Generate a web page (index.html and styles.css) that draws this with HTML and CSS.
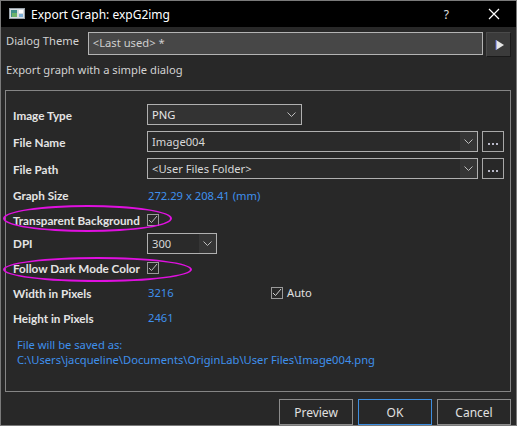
FILE: index.html
```html
<!DOCTYPE html>
<html>
<head>
<meta charset="utf-8">
<link rel="stylesheet" href="styles.css">
</head>
<body>
<div class="window">
  <div class="titlebar">
    <svg class="appicon" width="16" height="11" viewBox="0 0 16 11">
      <rect x="0.5" y="0.5" width="15" height="10" fill="#d8dde2" stroke="#9aa3ab"/>
      <rect x="2" y="2" width="6" height="7" fill="#3f8f8a"/>
      <rect x="3" y="5" width="5" height="4" fill="#6db36a"/>
      <rect x="10" y="2" width="4" height="3" fill="#ffffff"/>
      <rect x="10" y="6" width="4" height="3" fill="#7fb0d8"/>
    </svg>
    <span class="title">Export Graph: expG2img</span>
    <span class="help">?</span>
    <svg class="close" width="12" height="12" viewBox="0 0 12 12"><path d="M1 1L11 11M11 1L1 11" stroke="#ffffff" stroke-width="1.2"/></svg>
  </div>
  <div class="body">
    <div class="theme-row">
      <span class="theme-label">Dialog Theme</span>
      <div class="theme-input">&lt;Last used&gt; *</div>
      <div class="theme-btn"><svg width="10" height="12" viewBox="0 0 10 12"><path d="M1 1L9 6L1 11Z" fill="#e6e6e6"/><path d="M1 1V11" stroke="#5a6ad8" stroke-width="1"/></svg></div>
    </div>
    <div class="desc">Export graph with a simple dialog</div>
    <div class="group">
      <div class="row r1">
        <span class="label">Image Type</span>
        <div class="combo list w-type"><span class="ctext">PNG</span><span class="chev"><svg width="9" height="5" viewBox="0 0 9 5"><path d="M0.5 0.5L4.5 4.5L8.5 0.5" fill="none" stroke="#bdbdbd"/></svg></span></div>
      </div>
      <div class="row r2">
        <span class="label">File Name</span>
        <div class="combo edit w-long"><span class="ctext">Image004</span><span class="dropbtn"><svg width="9" height="5" viewBox="0 0 9 5"><path d="M0.5 0.5L4.5 4.5L8.5 0.5" fill="none" stroke="#bdbdbd"/></svg></span></div>
        <div class="dots"><span></span><span></span><span></span></div>
      </div>
      <div class="row r3">
        <span class="label">File Path</span>
        <div class="combo edit w-long"><span class="ctext">&lt;User Files Folder&gt;</span><span class="dropbtn"><svg width="9" height="5" viewBox="0 0 9 5"><path d="M0.5 0.5L4.5 4.5L8.5 0.5" fill="none" stroke="#bdbdbd"/></svg></span></div>
        <div class="dots"><span></span><span></span><span></span></div>
      </div>
      <div class="row r4">
        <span class="label">Graph Size</span>
        <span class="value">272.29 x 208.41 (mm)</span>
      </div>
      <div class="row r5">
        <span class="label lbl-inline">Transparent Background</span>
        <span class="check"><svg width="10" height="9" viewBox="0 0 10 9"><path d="M1 5L3.5 7.5L9 1" fill="none" stroke="#bdbdbd"/></svg></span>
      </div>
      <div class="row r6">
        <span class="label">DPI</span>
        <div class="combo edit w-dpi"><span class="ctext">300</span><span class="dropbtn"><svg width="9" height="5" viewBox="0 0 9 5"><path d="M0.5 0.5L4.5 4.5L8.5 0.5" fill="none" stroke="#bdbdbd"/></svg></span></div>
      </div>
      <div class="row r7">
        <span class="label lbl-inline">Follow Dark Mode Color</span>
        <span class="check"><svg width="10" height="9" viewBox="0 0 10 9"><path d="M1 5L3.5 7.5L9 1" fill="none" stroke="#bdbdbd"/></svg></span>
      </div>
      <div class="row r8">
        <span class="label">Width in Pixels</span>
        <span class="value num">3216</span>
        <span class="check auto-check"><svg width="10" height="9" viewBox="0 0 10 9"><path d="M1 5L3.5 7.5L9 1" fill="none" stroke="#d0d0d0"/></svg></span>
        <span class="auto">Auto</span>
      </div>
      <div class="row r9">
        <span class="label">Height in Pixels</span>
        <span class="value num">2461</span>
      </div>
      <div class="saved">
        <div>File will be saved as:</div>
        <div>C:\Users\jacqueline\Documents\OriginLab\User Files\Image004.png</div>
      </div>
    </div>
    <div class="buttons">
      <div class="btn">Preview</div>
      <div class="btn ok">OK</div>
      <div class="btn">Cancel</div>
    </div>
  </div>
  <div class="mark m1"></div>
  <div class="mark m2"></div>
</div>
</body>
</html>
```

FILE: styles.css
```css
* { box-sizing: border-box; }
html, body { margin: 0; padding: 0; background: #282828; }
body { font-family: "Noto Sans", "Open Sans", sans-serif; font-size: 11.2px; color: #e6e6e6; }
.window {
  position: relative;
  width: 517px; height: 426px;
  border: 1px solid #7a7a7a;
  background: #282828;
  display: flex; flex-direction: column;
}
.titlebar {
  height: 29px; background: #000;
  display: flex; align-items: center;
  color: #fff; font-size: 12px;
}
.appicon { margin-left: 8px; margin-top: -1px; }
.title { margin-left: 6px; }
.help { margin-left: auto; font-size: 12px; color: #e0e0e0; margin-right: 39px; }
.close { margin-right: 16px; }
.body { flex: 1; display: flex; flex-direction: column; padding: 0 5px 0 4px; }
.theme-row { display: flex; align-items: flex-start; margin-top: 5px; height: 25px; }
.theme-label { color: #d2d2d2; margin-left: 1px; width: 82px; line-height: 14px; margin-top: 2px; }
.theme-input {
  width: 396px; height: 23px;
  background: #474747; border: 1px solid #b4b4b4;
  color: #cfcfcf; padding-left: 4px; line-height: 20px;
}
.theme-btn {
  width: 25px; height: 25px; margin-left: 3px;
  background: #3b3b3b; border: 1px solid #1a1a1a;
  border-top-color: #4a4a4a; border-left-color: #4a4a4a;
  display: flex; align-items: center; justify-content: center; padding-left: 2px;
}
.desc { color: #d2d2d2; margin-left: 1px; margin-top: 6px; line-height: 14px; }
.group {
  margin-top: 13px;
  height: 302px;
  border: 1px solid #858585;
  padding: 10px 0 0 7px;
  display: flex; flex-direction: column;
}
.row { display: flex; align-items: center; }
.r1 { height: 27px; }
.r2 { height: 27px; }
.r3 { height: 27px; }
.r4 { height: 26px; }
.r5 { height: 23px; }
.r6 { height: 24px; }
.r7 { height: 25px; }
.r8 { height: 25px; }
.r9 { height: 25px; }
.label { font-family: "Lato", "Noto Sans", sans-serif; font-size: 11.7px; font-weight: bold; color: #e4e4e4; width: 134px; flex: none; }
.lbl-inline { width: auto; margin-right: 7px; }
.value { color: #3f90ec; margin-left: 1px; }
.combo {
  height: 21px; border: 1px solid #b0b0b0;
  display: flex; align-items: center;
}
.combo.list { background: #333; }
.combo.edit { background: #2a2a2a; }
.ctext { padding-left: 4px; flex: 1; color: #e6e6e6; }
.edit .ctext { color: #d8d8d8; }
.w-type { width: 155px; }
.w-type .chev { width: 18px; display: flex; justify-content: center; margin-right: 1px; }
.w-long { width: 331px; }
.w-dpi { width: 70px; }
.dropbtn { width: 17px; height: 19px; background: #353535; display: flex; align-items: center; justify-content: center; }
.dots {
  width: 22px; height: 21px; margin-left: 4px;
  border: 1px solid #a8a8a8;
  display: flex; justify-content: center; align-items: flex-end; gap: 2px; padding-bottom: 6px;
}
.dots span { width: 2px; height: 2px; background: #b8b8c8; }
.check {
  width: 12px; height: 12px; border: 1px solid #9a9a9a;
  display: flex; align-items: center; justify-content: center; flex: none;
}
.num { width: 123px; }
.auto-check { margin-left: 0; }
.auto { margin-left: 4px; color: #e0e0e0; }
.saved { color: #3f90ec; margin-left: 4px; margin-top: 7px; line-height: 15px; }
.buttons { display: flex; justify-content: flex-end; gap: 5px; margin-top: 7px; }
.btn {
  width: 74px; height: 26px;
  border: 1px solid #8c8c8c;
  display: flex; align-items: center; justify-content: center;
  color: #e0e0e0; font-size: 12px;
}
.btn.ok { border-color: #3d8ee0; }
.mark { position: absolute; border: 2px solid #e010e0; border-radius: 50%; }
.m1 { left: 2px; top: 204px; width: 169px; height: 27px; }
.m2 { left: 2px; top: 256px; width: 189px; height: 25px; }
```
